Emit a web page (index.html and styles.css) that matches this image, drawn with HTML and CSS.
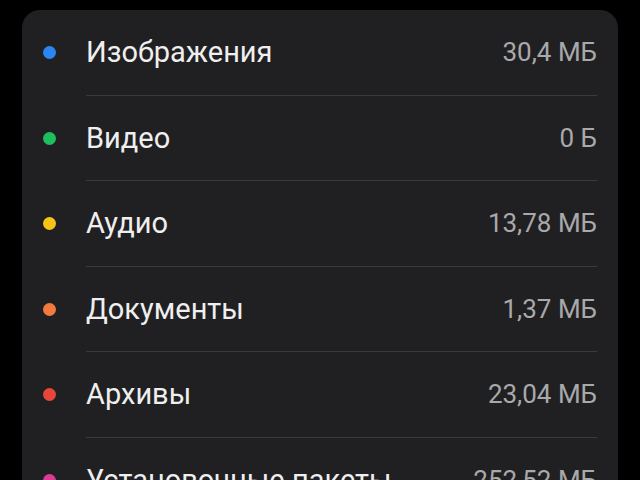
FILE: index.html
```html
<html lang="ru">
    <head>
        <meta charset="UTF-8">
        <meta name="viewport" content="width=device-width, initial-scale=1.0">
        <title>Хранилище</title>
        <link rel="stylesheet" href="styles.css">
    </head>
    <body>
        <div id="container">
            <div class="card">
                <div class="item">
                    <span class="dot blue"></span>
                    <div class="body">
                        <label>Изображения</label>
                        <span class="size">30,4 МБ</span>
                    </div>
                </div>
                <div class="item">
                    <span class="dot green"></span>
                    <div class="body">
                        <label>Видео</label>
                        <span class="size">0 Б</span>
                    </div>
                </div>
                <div class="item">
                    <span class="dot yellow"></span>
                    <div class="body">
                        <label>Аудио</label>
                        <span class="size">13,78 МБ</span>
                    </div>
                </div>
                <div class="item">
                    <span class="dot orange"></span>
                    <div class="body">
                        <label>Документы</label>
                        <span class="size">1,37 МБ</span>
                    </div>
                </div>
                <div class="item">
                    <span class="dot red"></span>
                    <div class="body">
                        <label>Архивы</label>
                        <span class="size">23,04 МБ</span>
                    </div>
                </div>
                <div class="item">
                    <span class="dot pink"></span>
                    <div class="body">
                        <label>Установочные пакеты</label>
                        <span class="size">252,52 МБ</span>
                    </div>
                </div>
            </div>
        </div>
    </body>
</html>
```

FILE: styles.css
```css
* {
    margin: 0;
    padding: 0;
    box-sizing: border-box;
    font-family: Roboto, "Noto Sans", sans-serif;
}

body, html {
    height: 100%;
    overflow: hidden;
    background: #000;
}

#container {
    padding: 10px 22px 0;
}

.card {
    background: #202022;
    border-radius: 18px;
}

.item {
    display: flex;
    align-items: stretch;
    height: 85.5px;
}

.dot {
    width: 13px;
    height: 13px;
    border-radius: 50%;
    align-self: center;
    margin: 0 30px 0 21px;
}
.dot.blue { background: #2b86f2; }
.dot.green { background: #1ebf5c; }
.dot.yellow { background: #f6c417; }
.dot.orange { background: #f27a3c; }
.dot.red { background: #e8463b; }
.dot.pink { background: #d83d93; }

.body {
    flex: 1;
    display: flex;
    align-items: center;
    justify-content: space-between;
    margin-right: 21px;
    border-bottom: 1px solid #3a3a3d;
}

.body label {
    font-size: 29px;
    color: #efefef;
}

.size {
    font-size: 26px;
    color: #a9a9ab;
}
```
